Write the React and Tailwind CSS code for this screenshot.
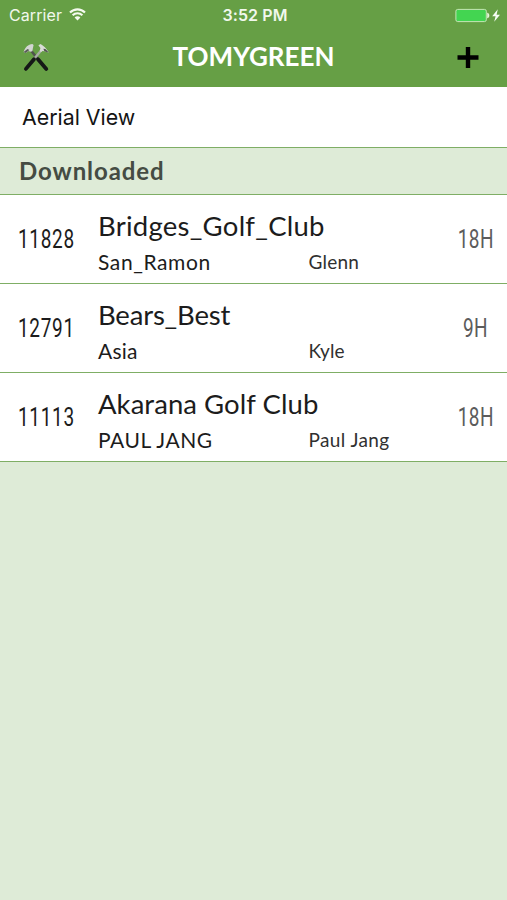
const courses = [
    { id: "11828", name: "Bridges_Golf_Club", place: "San_Ramon", author: "Glenn", holes: "18H", nameStyle: "tracking-[0.25px]", placeStyle: "tracking-[0.6px]", authorStyle: "tracking-[0.2px]" },
    { id: "12791", name: "Bears_Best", place: "Asia", author: "Kyle", holes: "9H", nameStyle: "tracking-[-0.2px]", placeStyle: "tracking-[0.2px]", authorStyle: "tracking-[0px]" },
    { id: "11113", name: "Akarana Golf Club", place: "PAUL JANG", author: "Paul Jang", holes: "18H", nameStyle: "tracking-[0.05px]", placeStyle: "tracking-[0.5px]", authorStyle: "tracking-[0.4px]" },
];

const WifiIcon = () => (
    <svg className="w-[17px] h-[13px] -translate-x-px -translate-y-px" viewBox="0 0 17 13" fill="none" stroke="#f4faef" strokeWidth="2.1">
        <path d="M1 4.6C5.2 0.3 11.8 0.3 16 4.6" />
        <path d="M3.6 7.3C6.4 4.5 10.6 4.5 13.4 7.3" />
        <path d="M8.5 12.4L5.6 9.5C7.2 7.9 9.8 7.9 11.4 9.5Z" fill="#f4faef" stroke="none" />
    </svg>
);

const BatteryIcon = () => (
    <svg className="w-[46px] h-[15px]" viewBox="0 0 46 15">
        <rect x="0.9" y="1.4" width="30.4" height="12.2" rx="1.8" fill="#43d551" stroke="#c4e6b5" strokeWidth="1" />
        <path d="M32.2 4.7C35 5.2 35 9.8 32.2 10.3Z" fill="#e5f5dc" />
        <path d="M42.8 1.2L37.2 8.2H40.6L39.2 13.8L45 6.7H41.6Z" fill="#f7fcf4" />
    </svg>
);

const ToolsIcon = () => (
    <svg className="w-[28px] h-[30px] translate-y-[0.5px]" viewBox="0 0 28 30">
        <path d="M8.5 7.5L15.5 16" stroke="#4e534c" strokeWidth="2.6" />
        <path d="M19.5 7.5L12 16.5" stroke="#a9aea6" strokeWidth="2.4" />
        <path d="M16 16.7L24.3 26.4" stroke="#151817" strokeWidth="3.8" strokeLinecap="round" />
        <path d="M12 16.7L3.9 26.4" stroke="#151817" strokeWidth="3.8" strokeLinecap="round" />
        <path d="M1.6 9.6C3.2 4.6 6 2 10.4 1.6L11.6 2.6L10.8 6.2L10.4 8.8L8.4 9.2L6.6 8.6L3.6 10.6Z" fill="#d2d5d1" />
        <path d="M1.6 9.6L5.5 6.4L7.4 7.6L3.6 10.6Z" fill="#5a5e58" />
        <path d="M16.4 2.8L18.6 1.6C21.4 3.4 24.4 5.8 27 10.2L22.4 8.8L20.6 8.4L18.8 9.8L17.8 8.2L18.4 5.6Z" fill="#d9dcd7" />
        <path d="M21.4 6.2L23.4 6.6L27 10.2L22.4 8.8Z" fill="#4d514c" />
    </svg>
);

const Header = () => (
    <header className="h-[87px] bg-[#669f45]">
        <div className="grid grid-cols-[1fr_auto_1fr] items-center h-[30px] pl-[9px] pr-[6px] font-['Inter',sans-serif] text-[#f1f8ec]">
            <div className="flex items-center gap-[8px]">
                <span className="text-[16px] leading-[30px] tracking-[0.1px]">Carrier</span>
                <WifiIcon />
            </div>
            <span className="text-[16px] leading-[30px] font-semibold tracking-[0.1px]">3:52 PM</span>
            <div className="flex justify-end">
                <BatteryIcon />
            </div>
        </div>
        <div className="flex justify-between items-center h-[54px] pl-[22px] pr-[28px]">
            <button><ToolsIcon /></button>
            <h1 className="w-[164px] -translate-y-px flex justify-center whitespace-nowrap font-['Lato',sans-serif] font-bold text-[26px] leading-none text-white">
                <span>TOMYGREEN</span>
            </h1>
            <button>
                <svg className="w-[22px] h-[22px] translate-y-[0.5px]" viewBox="0 0 22 22" stroke="#000" strokeWidth="4.4">
                    <path d="M11 0.5V21.5M0.5 11H21.5" />
                </svg>
            </button>
        </div>
    </header>
);

const CourseRow = ({ course }) => (
    <li className="flex h-[89px] bg-white border-b border-[#7fae65] text-[#1c1c1c]">
        <div className="w-[98px] pl-[18px] pt-[31px] font-['Roboto',sans-serif] text-[25px] leading-[28px]">
            <span className="inline-block origin-left scale-x-[0.76] tracking-[0.9px]">{course.id}</span>
        </div>
        <div className="w-[340px] pt-[13px] font-['Lato',sans-serif] whitespace-nowrap">
            <div className={`text-[27.5px] leading-[35px] ${course.nameStyle}`}>{course.name}</div>
            <div className="flex items-center">
                <span className={`w-[210.5px] text-[21px] leading-[38px] ${course.placeStyle}`}>{course.place}</span>
                <span className={`text-[19px] leading-[38px] text-[#303030] ${course.authorStyle}`}>{course.author}</span>
            </div>
        </div>
        <div className="w-[69px] pl-[6px] flex justify-center pt-[31px] font-['Roboto',sans-serif] text-[25px] leading-[28px] text-[#5c5c5c]">
            <span className="scale-x-[0.76] tracking-[0.6px]">{course.holes}</span>
        </div>
    </li>
);

const App = () => {
    return (
        <div className="w-full h-[900px] bg-[#deebd7] overflow-hidden">
            <Header />
            <div className="h-[61px] bg-white border-b border-[#7fae65] pl-[22px] font-['Inter',sans-serif] text-[22px] leading-[60px] text-[#141414]">
                <span className="inline-block origin-left scale-x-[0.97]">Aerial View</span>
            </div>
            <h2 className="h-[47px] border-b border-[#7fae65] pl-[19px] font-['Lato',sans-serif] font-bold text-[24px] leading-[46px] tracking-[0.9px] text-[#454c43]">Downloaded</h2>
            <ul>
                {courses.map((course) => <CourseRow key={course.id} course={course} />)}
            </ul>
        </div>
    );
}

export default App;
